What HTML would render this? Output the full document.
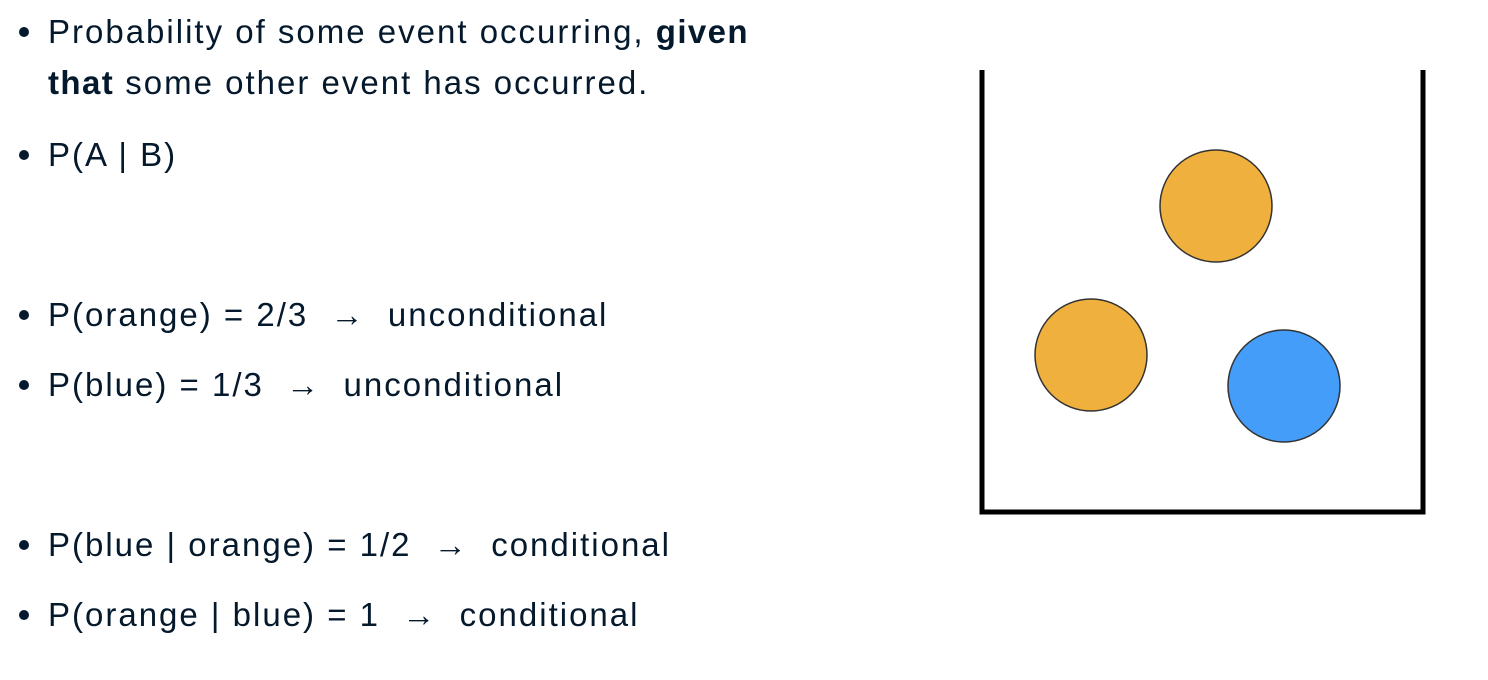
<!DOCTYPE html>
<html><head><style>
body{margin:0;width:1488px;height:680px;background:#fff;position:relative;overflow:hidden;font-family:"Liberation Sans",sans-serif;color:#05192d}
.l{position:absolute;left:48px;font-size:33px;letter-spacing:2px;line-height:1;white-space:nowrap}
.l::before{content:"";position:absolute;left:-29px;top:12px;width:10px;height:10px;border-radius:50%;background:#05192d}
.n::before{display:none}
b{font-weight:700;letter-spacing:1.4px}
</style></head><body>
<div class="l" style="top:15px">Probability of some event occurring, <b>given</b></div>
<div class="l n" style="top:66px"><b>that</b> some other event has occurred.</div>
<div class="l" style="top:138px">P(A | B)</div>
<div class="l" style="top:298px">P(orange) = 2/3 &nbsp;→&nbsp; unconditional</div>
<div class="l" style="top:368px">P(blue) = 1/3 &nbsp;→&nbsp; unconditional</div>
<div class="l" style="top:528px">P(blue | orange) = 1/2 &nbsp;→&nbsp; conditional</div>
<div class="l" style="top:598px">P(orange | blue) = 1 &nbsp;→&nbsp; conditional</div>
<svg style="position:absolute;left:0;top:0" width="1488" height="680">
<path d="M982 70 V512 H1423 V70" fill="none" stroke="#000" stroke-width="5"/>
<circle cx="1216" cy="206" r="56" fill="#f0b03e" stroke="#333" stroke-width="1.5"/>
<circle cx="1091" cy="355" r="56" fill="#f0b03e" stroke="#333" stroke-width="1.5"/>
<circle cx="1284" cy="386" r="56" fill="#459dfa" stroke="#333" stroke-width="1.5"/>
</svg>
</body></html>
